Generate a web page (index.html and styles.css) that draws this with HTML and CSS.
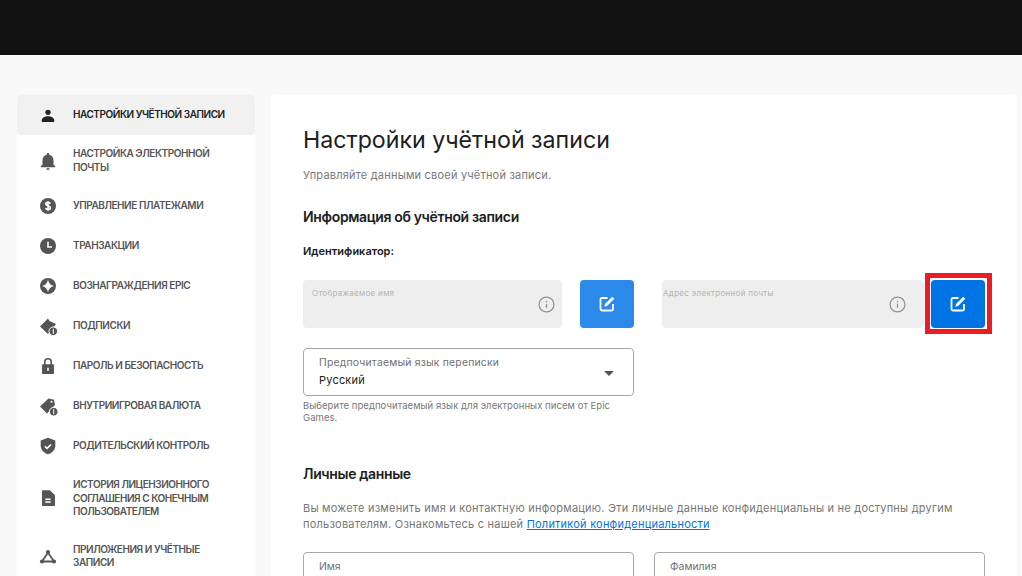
FILE: index.html
```html
<!DOCTYPE html>
<html lang="ru">
<head>
    <meta charset="UTF-8">
    <meta name="viewport" content="width=device-width, initial-scale=1.0">
    <title>Настройки учётной записи</title>
    <link rel="stylesheet" href="styles.css">
</head>
<body>
    <header class="topbar"></header>

    <div class="page">
        <nav class="sidebar">
            <a class="nav-item active">
                <svg class="nav-icon" viewBox="0 0 20 20"><circle cx="10" cy="7.300" r="2.600"/><path d="M3.800 17v-1.800c0-2.700 3.700-4 6.200-4s6.200 1.300 6.200 4V17z"/></svg>
                <span>Настройки учётной записи</span>
            </a>
            <a class="nav-item">
                <svg class="nav-icon" viewBox="0 0 20 20"><path d="M10 2a1.300 1.300 0 0 1 1.300 1.300v.5c2.700.7 4.200 2.900 4.200 5.700v4l1.700 1.800v.9H2.800v-.9l1.700-1.800v-4c0-2.800 1.500-5 4.200-5.700v-.5A1.300 1.300 0 0 1 10 2z"/><path d="M8.300 17.300h3.400a1.700 1.700 0 0 1-3.400 0z"/></svg>
                <span>Настройка электронной почты</span>
            </a>
            <a class="nav-item">
                <svg class="nav-icon" viewBox="0 0 20 20"><circle cx="10" cy="10" r="8"/><path class="cut" d="M12.300 7.800c-.3-.9-1.100-1.400-2.300-1.400-1.300 0-2.300.7-2.300 1.700 0 2.400 4.700 1.200 4.700 3.600 0 1-1 1.800-2.400 1.800-1.200 0-2.100-.5-2.400-1.500M10 5.200v9.600"/></svg>
                <span>Управление платежами</span>
            </a>
            <a class="nav-item">
                <svg class="nav-icon" viewBox="0 0 20 20"><circle cx="10" cy="10" r="8"/><path class="cut" d="M10 5.800V11h4"/></svg>
                <span>Транзакции</span>
            </a>
            <a class="nav-item">
                <svg class="nav-icon" viewBox="0 0 20 20"><circle cx="10" cy="10" r="8"/><path fill="#fff" d="M10 4c.9 3.300 2.700 5.100 6 6-3.300.9-5.100 2.700-6 6-.9-3.300-2.700-5.100-6-6 3.300-.9 5.100-2.700 6-6z"/></svg>
                <span>Вознаграждения Epic</span>
            </a>
            <a class="nav-item">
                <svg class="nav-icon" viewBox="0 0 20 20"><path d="M2 10.500 10 2.500l1.500 2.500L18 8l-8 10z"/><circle cx="15.300" cy="15.300" r="4.300" stroke="#fff"/><path class="cut thin" d="M15.300 12.800v5"/></svg>
                <span>Подписки</span>
            </a>
            <a class="nav-item">
                <svg class="nav-icon" viewBox="0 0 20 20"><path d="M5 8.200h1V6a4 4 0 0 1 8 0v2.200h1c.6 0 1 .4 1 1V17c0 .6-.4 1-1 1H5c-.6 0-1-.4-1-1V9.200c0-.6.4-1 1-1zm2.600 0h4.800V6a2.400 2.400 0 0 0-4.800 0z"/><path class="cut" d="M10 11.800v3"/></svg>
                <span>Пароль и безопасность</span>
            </a>
            <a class="nav-item">
                <svg class="nav-icon" viewBox="0 0 20 20"><path d="M2 10.500 10.500 2.500l5.500 1.200 1 5.300-8 8.500z"/><circle cx="15.700" cy="15.700" r="4.300" stroke="#fff"/><circle class="hole" cx="13.500" cy="5.800" r="1"/><path class="cut thin" d="M15.700 13.200v5"/></svg>
                <span>Внутриигровая валюта</span>
            </a>
            <a class="nav-item">
                <svg class="nav-icon" viewBox="0 0 20 20"><path d="M10 1.800 17.300 4.500v5c0 4.400-3 7.500-7.300 8.800-4.300-1.300-7.300-4.400-7.300-8.800v-5z"/><path class="cut" d="M7 10.300l2.100 2 3.900-3.800"/></svg>
                <span>Родительский контроль</span>
            </a>
            <a class="nav-item">
                <svg class="nav-icon" viewBox="0 0 20 20"><path d="M5 2.200h7l5 5v9.800c0 .6-.5 1-1 1H5c-.6 0-1-.4-1-1V3.200c0-.6.4-1 1-1z"/><path class="cut" d="M7.300 11.300h5.400M7.300 14h5.400"/></svg>
                <span>История лицензионного соглашения с конечным пользователем</span>
            </a>
            <a class="nav-item">
                <svg class="nav-icon" viewBox="0 0 20 20"><path class="line" d="M10 6.500 4 15.500h12z"/><circle cx="10" cy="6" r="2.100"/><circle cx="4" cy="15.500" r="2.100"/><circle cx="16" cy="15.500" r="2.100"/></svg>
                <span>Приложения и учётные записи</span>
            </a>
        </nav>

        <main class="content">
            <h1>Настройки учётной записи</h1>
            <p class="lead">Управляйте данными своей учётной записи.</p>

            <h2>Информация об учётной записи</h2>
            <h3>Идентификатор:</h3>

            <div class="id-row">
                <div class="id-group">
                    <div class="locked">
                        <span class="locked-label">Отображаемое имя</span>
                        <svg class="info" viewBox="0 0 16 16"><circle cx="8" cy="8" r="7"/><path d="M8 7.200v4M8 4.400v1.400"/></svg>
                    </div>
                    <button class="edit-btn soft">
                        <svg viewBox="0 0 16 16"><path d="M8.500 2H3a1.500 1.500 0 0 0-1.500 1.500v9.500A1.500 1.500 0 0 0 3 14.500h9.500A1.500 1.500 0 0 0 14 13V8"/><path class="solid" d="M13.200.7l2.100 2.100-7.200 7.200-2.800.7.700-2.800z"/></svg>
                    </button>
                </div>
                <div class="id-group second">
                    <div class="locked">
                        <span class="locked-label">Адрес электронной почты</span>
                        <svg class="info" viewBox="0 0 16 16"><circle cx="8" cy="8" r="7"/><path d="M8 7.200v4M8 4.400v1.400"/></svg>
                    </div>
                    <div class="highlight">
                        <button class="edit-btn">
                            <svg viewBox="0 0 16 16"><path d="M8.500 2H3a1.500 1.500 0 0 0-1.500 1.500v9.500A1.500 1.500 0 0 0 3 14.500h9.500A1.500 1.500 0 0 0 14 13V8"/><path class="solid" d="M13.200.7l2.100 2.100-7.200 7.200-2.800.7.700-2.800z"/></svg>
                        </button>
                    </div>
                </div>
            </div>

            <div class="form-col">
                <div class="select-box">
                    <span class="box-label">Предпочитаемый язык переписки</span>
                    <span class="box-value">Русский</span>
                    <span class="caret"></span>
                </div>
                <p class="hint">Выберите предпочитаемый язык для электронных писем от Epic Games.</p>
            </div>

            <h2 class="personal">Личные данные</h2>
            <p class="note">Вы можете изменить имя и контактную информацию. Эти личные данные конфиденциальны и не доступны другим пользователям. Ознакомьтесь с нашей <a href="#">Политикой конфиденциальности</a></p>

            <div class="name-row">
                <div class="name-box"><span class="box-label">Имя</span></div>
                <div class="name-box"><span class="box-label">Фамилия</span></div>
            </div>
        </main>
    </div>
</body>
</html>
```

FILE: styles.css
```css
html, body {
    height: 576px;
    overflow: hidden;
}

body {
    font-family: Inter, "Liberation Sans", sans-serif;
    margin: 0;
    padding: 0;
    background-color: #f9f9f9;
    color: #202020;
}

.topbar {
    height: 55px;
    background-color: #121212;
}

.page {
    display: flex;
    align-items: flex-start;
    gap: 16px;
    height: 521px;
    overflow: hidden;
    padding: 40px 5px 0 17px;
    box-sizing: border-box;
}

/* sidebar */
.sidebar {
    flex: 0 0 238px;
    background: white;
    border-radius: 4px;
}

.nav-item {
    display: flex;
    align-items: center;
    gap: 15px;
    min-height: 40px;
    padding: 12px 16px 12px 21px;
    box-sizing: border-box;
    font-size: 10px;
    line-height: 13.500px;
    font-weight: 600;
    letter-spacing: -0.45px;
    text-transform: uppercase;
    color: #555;
}

.nav-item.active {
    background-color: #f1f1f1;
    border-radius: 4px;
    color: #202020;
}

.nav-icon {
    flex: 0 0 20px;
    width: 20px;
    height: 20px;
    margin: -4px 0;
    fill: #555;
}

.active .nav-icon {
    fill: #202020;
}

.nav-icon .cut {
    fill: none;
    stroke: white;
    stroke-width: 1.600;
}

.nav-icon .thin {
    stroke-width: 1;
}

.nav-icon .line {
    fill: none;
    stroke: #555;
    stroke-width: 1.800;
}

.nav-icon .hole {
    fill: white;
}

/* main card */
.content {
    flex: 1;
    height: 481px;
    background: white;
    border-radius: 4px;
    padding: 31px 32px 0;
    box-sizing: border-box;
    overflow: hidden;
}

h1 {
    margin: 0;
    font-size: 23.200px;
    line-height: 29px;
    font-weight: 400;
    color: #202020;
}

.lead {
    margin: 12px 0 0;
    font-size: 11px;
    line-height: 16px;
    letter-spacing: 0.2px;
    color: #777;
}

h2 {
    margin: 25px 0 0;
    font-size: 14px;
    line-height: 18px;
    font-weight: 600;
    letter-spacing: -0.35px;
    color: #202020;
}

h3 {
    margin: 18px 0 0;
    font-size: 11px;
    line-height: 14px;
    font-weight: 600;
    color: #202020;
}

.id-row {
    display: grid;
    grid-template-columns: 331px 331px;
    gap: 20px;
    margin-top: 22px;
}

.id-group {
    display: flex;
    gap: 18px;
}

.id-group.second {
    gap: 7px;
    margin-left: 8px;
    margin-right: -8px;
    width: 323px;
}

.locked {
    flex: 1;
    position: relative;
    height: 48px;
    background-color: #eeeeee;
    border-radius: 4px;
}

.locked-label {
    position: absolute;
    left: 9px;
    top: 8px;
    font-size: 8px;
    line-height: 10px;
    letter-spacing: 0.3px;
    color: #b4b4b4;
}

.second .locked-label {
    left: 1px;
}

.info {
    position: absolute;
    right: 7px;
    top: 16px;
    width: 17px;
    height: 17px;
    fill: none;
    stroke: #949494;
    stroke-width: 1.200;
}

.second .info {
    right: 18px;
}

.edit-btn {
    display: flex;
    align-items: center;
    justify-content: center;
    width: 54px;
    height: 48px;
    padding: 0;
    border: 0;
    border-radius: 4px;
    background-color: #2a89e9;
}

.edit-btn.soft {
    flex: 0 0 54px;
}

.second .edit-btn {
    background-color: #0074e4;
}

.edit-btn svg {
    width: 16px;
    height: 16px;
    fill: none;
    stroke: white;
    stroke-width: 1.800;
}

.edit-btn .solid {
    fill: white;
    stroke: none;
}

.highlight {
    flex: 0 0 54px;
    position: relative;
    height: 48px;
}

.highlight::after {
    content: "";
    position: absolute;
    left: -6px;
    right: -7px;
    top: -7px;
    bottom: -6px;
    border: 5px solid #ed1c24;
}

.form-col {
    width: 331px;
    margin-top: 20px;
}

.select-box {
    position: relative;
    height: 48px;
    border: 1px solid #a8a8a8;
    border-radius: 4px;
    box-sizing: border-box;
}

.box-label {
    position: absolute;
    left: 15px;
    top: 7px;
    font-size: 10.400px;
    line-height: 13px;
    letter-spacing: 0.2px;
    color: #707070;
}

.name-box .box-label {
    letter-spacing: 0;
}

.box-value {
    position: absolute;
    left: 15px;
    top: 24px;
    font-size: 11px;
    line-height: 15px;
    letter-spacing: 0.2px;
    color: #202020;
}

.caret {
    position: absolute;
    right: 19px;
    top: 22px;
    border-style: solid;
    border-width: 5px 5px 0;
    border-color: #555 transparent transparent;
}

.hint {
    margin: 4px 0 0;
    font-size: 9.500px;
    line-height: 12px;
    letter-spacing: 0.06px;
    color: #777;
}

h2.personal {
    margin-top: 41px;
}

.note {
    margin: 17px 0 0;
    font-size: 11px;
    line-height: 16px;
    letter-spacing: 0.22px;
    color: #777;
}

.note a {
    color: #0074e4;
}

.name-row {
    display: grid;
    grid-template-columns: 331px 331px;
    gap: 20px;
    margin-top: 20px;
}

.name-box {
    position: relative;
    height: 48px;
    border: 1px solid #a8a8a8;
    border-radius: 4px;
    box-sizing: border-box;
}
```
